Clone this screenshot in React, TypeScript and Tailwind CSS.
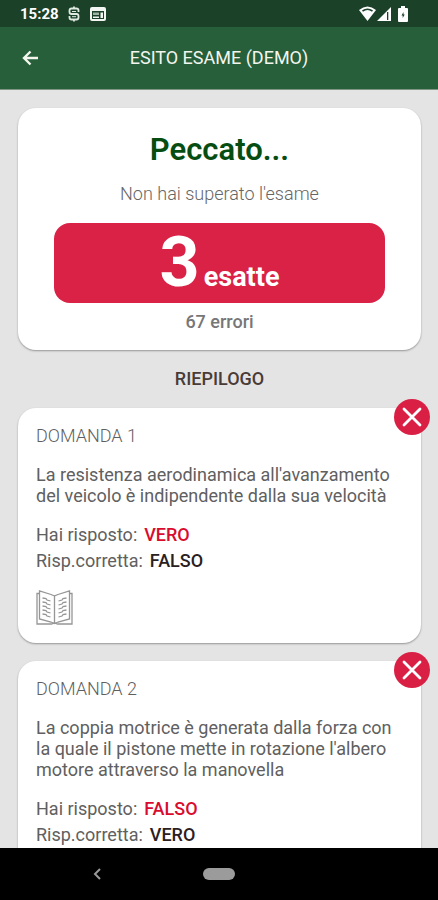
type Question = {
  id: number;
  text: string;
  given: string;
  correct: string;
};

const questions: Question[] = [
  {
    id: 1,
    text: "La resistenza aerodinamica all'avanzamento del veicolo è indipendente dalla sua velocità",
    given: "VERO",
    correct: "FALSO",
  },
  {
    id: 2,
    text: "La coppia motrice è generata dalla forza con la quale il pistone mette in rotazione l'albero motore attraverso la manovella",
    given: "FALSO",
    correct: "VERO",
  },
];

function StatusBar() {
  return (
    <div className="flex h-[27px] shrink-0 items-center bg-[#1b4128] pr-[30px] pl-5 text-white">
      <span className="text-[15px] leading-5 font-bold">15:28</span>
      <svg className="ml-[9px] h-4 w-3" viewBox="0 0 12 16" fill="none" stroke="#dfe9e1" strokeWidth="1.8">
        <path d="M10.5 6V4.500Q10.500 2.500 8.500 2.500H3.500Q1.500 2.500 1.500 4.500V6Q1.500 8 3.500 8H8.500Q10.500 8 10.500 10V11.500Q10.500 13.500 8.500 13.500H3.500Q1.500 13.500 1.500 11.500V10" />
        <path d="M4 5.500H8M4 10.700H8" strokeWidth="1" />
        <path d="M6 0.500V2M6 14V15.500" />
      </svg>
      <svg className="ml-[10px] h-[14px] w-4" viewBox="0 0 16 14">
        <path fillRule="evenodd" fill="#f2f6f3" d="M2 0H14Q16 0 16 2V12Q16 14 14 14H2Q0 14 0 12V2Q0 0 2 0ZM2 4V12H14V4Z" />
        <path fill="#f2f6f3" d="M10.500 5.500H13V11H10.500ZM3 9.500H9V11H3Z" />
        <path fill="#9db3a4" d="M3 5.500H9V8H3Z" />
      </svg>
      <div className="ml-auto flex items-center">
        <svg className="h-[15px] w-[17px]" viewBox="0 0 17 15">
          <path fill="#fff" d="M8.500 15L0 4Q8.500 -3 17 4Z" />
          <path fill="none" stroke="#1b4128" strokeWidth="1.6" d="M3.500 5Q8.500 1.500 13.500 5" />
        </svg>
        <svg className="ml-px h-[14px] w-[14px]" viewBox="0 0 14 14">
          <path fill="#fff" d="M0 14L14 0V14Z" />
          <path fill="#1b4128" d="M10 5H11.300V13H10Z" />
        </svg>
        <svg className="ml-[7px] h-4 w-[10px]" viewBox="0 0 10 16">
          <path fill="#fff" d="M3 0H7V2H9Q10 2 10 3V15Q10 16 9 16H1Q0 16 0 15V3Q0 2 1 2H3Z" />
          <path fill="#1b4128" d="M5.500 6L3.500 9.500H4.700V12L6.700 8.500H5.500Z" />
        </svg>
      </div>
    </div>
  );
}

function Header() {
  return (
    <header className="grid h-[63px] shrink-0 grid-cols-[60px_1fr_60px] items-center border-b border-[#7f9685] bg-[#265f3a] text-white">
      <button type="button" aria-label="Indietro" className="flex h-full items-center pl-[22px]">
        <svg className="h-4 w-4" viewBox="0 0 16 16" fill="none" stroke="#f3f5ee" strokeWidth="2.4">
          <path d="M16 8H2M8.500 1.500L2 8L8.500 14.500" />
        </svg>
      </button>
      <h1 className="text-center text-lg leading-6 text-[#f3f5ee]">ESITO ESAME (DEMO)</h1>
    </header>
  );
}

function ResultCard() {
  return (
    <section className="flex flex-col items-center rounded-[18px] bg-white px-9 pt-6 pb-[18px] shadow-[0_1px_2px_rgba(0,0,0,0.35)]">
      <h2 className="text-[31px] leading-9 font-semibold text-[#064d12]">Peccato...</h2>
      <p className="mt-4 text-lg leading-5 font-light text-[#666]">Non hai superato l'esame</p>
      <p className="mt-[19px] flex h-20 w-full items-baseline justify-center gap-1 rounded-2xl bg-[#da2146] font-bold text-white">
        <span className="text-[70px] leading-[78px]">3</span>
        <span className="text-[27px] leading-8">esatte</span>
      </p>
      <p className="mt-[9px] text-lg leading-5 font-medium text-[#777]">67 errori</p>
    </section>
  );
}

function BookIcon() {
  return (
    <svg className="h-[35px] w-[37px]" viewBox="0 0 37 35" fill="none" stroke="#969696" strokeWidth="1.3">
      <path d="M3.500 3.500H1V34H15.500L18.500 33L21.500 34H36V3.500H33.500" />
      <path d="M18.500 6L15 4.500L3.500 1V29L15 32L18.500 33.500L22 32L33.500 29V1L22 4.500L18.500 6V33" />
      <path d="M6.500 8L10 8.500L11 10L14.500 11M6.500 12L10 12.500L11 14L14.500 15M6.500 16L10 16.500L11 18L14.500 19M6.500 20L10 20.500L11 22L14.500 23M6.500 24L10 24.500L11 26L14.500 27M30.500 8L27 8.500L26 10L22.500 11M30.500 12L27 12.500L26 14L22.500 15M30.500 16L27 16.500L26 18L22.500 19M30.500 20L27 20.500L26 22L22.500 23M30.500 24L27 24.500L26 26L22.500 27" />
    </svg>
  );
}

function QuestionCard({ question }: { question: Question }) {
  return (
    <article className="relative rounded-[18px] bg-white px-[18px] pt-[17px] pb-[18px] text-lg leading-[21px] text-[#606060] shadow-[0_1px_2px_rgba(0,0,0,0.35)]">
      <svg className="absolute -top-[9px] -right-[9px] h-9 w-9" viewBox="0 0 36 36" role="img" aria-label="Risposta errata">
        <circle cx="18" cy="18" r="18" fill="#da1f45" />
        <path d="M10 10L26 26M26 10L10 26" stroke="#fff" strokeWidth="2.8" strokeLinecap="round" />
      </svg>
      <h3 className="font-light text-[#5f5f5f]">DOMANDA {question.id}</h3>
      <p className="mt-[18px]">{question.text}</p>
      <dl className="mt-4 leading-[26px]">
        <div className="flex gap-[7px]">
          <dt>Hai risposto:</dt>
          <dd className="font-medium text-[#d90b2e]">{question.given}</dd>
        </div>
        <div className="flex gap-[7px]">
          <dt>Risp.corretta:</dt>
          <dd className="font-medium text-[#2b2020]">{question.correct}</dd>
        </div>
      </dl>
      <button type="button" aria-label="Apri la teoria" className="mt-4 block">
        <BookIcon />
      </button>
    </article>
  );
}

function NavigationBar() {
  return (
    <nav className="grid h-[52px] shrink-0 grid-cols-3 items-center bg-black">
      <button type="button" aria-label="Indietro" className="flex justify-center pl-12">
        <svg className="h-3 w-2" viewBox="0 0 8 12" fill="none" stroke="#999" strokeWidth="2">
          <path d="M7 1L2 6L7 11" />
        </svg>
      </button>
      <button type="button" aria-label="Home" className="mx-auto h-3 w-8 rounded-full bg-[#9b9b9b]" />
    </nav>
  );
}

export default function App() {
  return (
    <div className="flex h-screen flex-col overflow-hidden bg-[#e4e4e4] font-[Roboto,sans-serif]">
      <StatusBar />
      <Header />
      <main className="min-h-0 flex-1 overflow-hidden pt-[18px] pr-[17px] pl-[18px]">
        <ResultCard />
        <h2 className="mt-[19px] text-center text-lg leading-5 font-medium text-[#493b37]">RIEPILOGO</h2>
        <div className="mt-[19px] flex flex-col gap-[18px]">
          {questions.map((question) => (
            <QuestionCard key={question.id} question={question} />
          ))}
        </div>
      </main>
      <NavigationBar />
    </div>
  );
}
